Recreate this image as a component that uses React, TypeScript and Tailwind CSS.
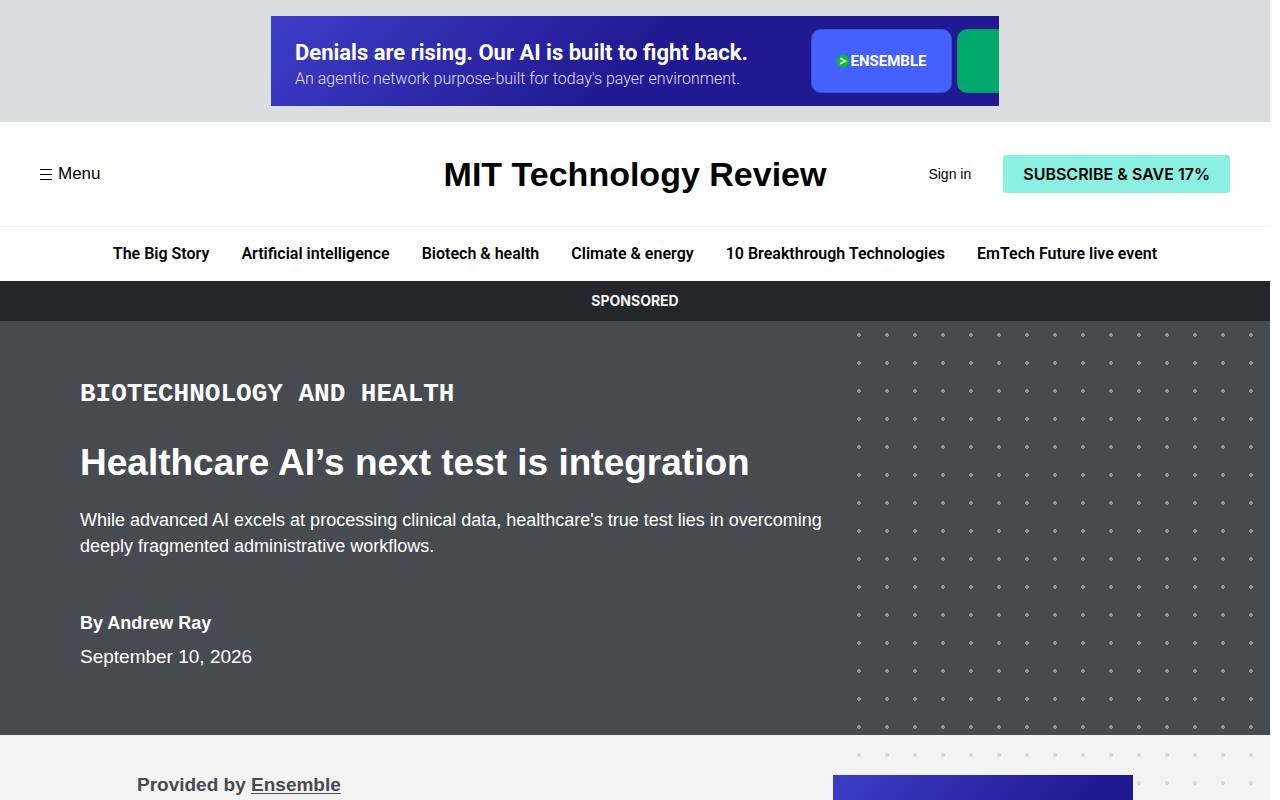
import React from "react";

const navItems = [
  "The Big Story",
  "Artificial intelligence",
  "Biotech & health",
  "Climate & energy",
  "10 Breakthrough Technologies",
  "EmTech Future live event",
];

const adGradient = "bg-[linear-gradient(135deg,#3d3dc8_0%,#211991_50%)]";

function EnsembleMark() {
  return (
    <svg viewBox="0 0 24 24" className="size-3 shrink-0" aria-hidden="true">
      <circle cx="12" cy="12" r="12" fill="#00c814" />
      <path d="M6.5 6.5 17 12 6.5 17.5" fill="none" stroke="#fff" strokeWidth="3" />
    </svg>
  );
}

function BannerAd() {
  return (
    <aside className="flex justify-center bg-[#dcdddf] py-4">
      <a
        href="#ensemble"
        className={`flex h-[90px] w-[728px] items-center overflow-hidden pl-6 font-[Roboto,sans-serif] text-white ${adGradient}`}
      >
        <div className="w-[516px] shrink-0 pt-2">
          <p className="text-[22px] leading-7 font-bold">Denials are rising. Our AI is built to fight back.</p>
          <p className="text-[16px] leading-6 font-light text-[#e0dff5]">
            An agentic network purpose-built for today's payer environment.
          </p>
        </div>
        <div className="flex h-16 w-[141px] shrink-0 items-center justify-center gap-0.5 rounded-[10px] border border-[#3a4fd8] bg-[#4460ff]">
          <EnsembleMark />
          <span className="text-[15px] leading-5 font-bold">ENSEMBLE</span>
        </div>
        <div className="ml-[5px] h-16 w-[141px] shrink-0 rounded-[10px] border border-[#0d8f6d] bg-[#00a86b]" />
      </a>
    </aside>
  );
}

function Header() {
  return (
    <header className="bg-white">
      <div className="grid h-[104px] grid-cols-[1fr_auto_1fr] items-center px-10">
        <button type="button" className="flex items-center gap-1.5 justify-self-start text-[17px] leading-6">
          <svg viewBox="0 0 12 11" className="h-[11px] w-3" fill="#000" shapeRendering="crispEdges" aria-hidden="true">
            <path d="M0 0h12v1H0zM0 5h12v1H0zM0 10h12v1H0z" />
          </svg>
          Menu
        </button>
        <a href="#home" className="text-[34px] leading-12 font-bold whitespace-nowrap">
          MIT Technology Review
        </a>
        <div className="flex items-center gap-8 justify-self-end">
          <a href="#signin" className="text-[14px] leading-5">
            Sign in
          </a>
          <a
            href="#subscribe"
            className="rounded-[3px] bg-[#8af0e1] px-5 py-2 font-[Inter,sans-serif] text-[16px] leading-[22px] font-semibold whitespace-nowrap"
          >
            SUBSCRIBE & SAVE 17%
          </a>
        </div>
      </div>
      <nav className="border-t border-[#f3f3f9]">
        <ul className="flex h-[54px] items-center justify-center gap-8 font-[Roboto,sans-serif] text-[16px] font-semibold whitespace-nowrap">
          {navItems.map((item) => (
            <li key={item}>
              <a href="#topic">{item}</a>
            </li>
          ))}
        </ul>
      </nav>
    </header>
  );
}

function DotPattern() {
  return (
    <svg className="pointer-events-none absolute inset-y-0 right-0 h-full w-[425px]" aria-hidden="true">
      <defs>
        <pattern id="dots" width="28" height="28" patternUnits="userSpaceOnUse">
          <path
            d="M13 12h2v1h1v2h-1v1h-2v-1h-1v-2h1z"
            fill="#c6c6c6"
            fillOpacity="0.6"
            shapeRendering="crispEdges"
          />
        </pattern>
      </defs>
      <rect width="100%" height="100%" fill="url(#dots)" />
    </svg>
  );
}

function Article() {
  return (
    <main className="relative bg-[#f3f3f3]">
      <section className="bg-[#484a52] px-20 pt-[60px] pb-[62px] text-white">
        <p className="font-['Liberation_Mono',monospace] text-[26px] leading-[26px] font-bold">
          BIOTECHNOLOGY AND HEALTH
        </p>
        <h1 className="mt-8 text-[37px] leading-12 font-bold">Healthcare AI’s next test is integration</h1>
        <p className="mt-5 max-w-[770px] text-[18px] leading-[26px]">
          While advanced AI excels at processing clinical data, healthcare's true test lies in overcoming deeply
          fragmented administrative workflows.
        </p>
        <p className="mt-12 text-[18px] leading-[33px] font-bold">By Andrew Ray</p>
        <p className="text-[19px] leading-[33px]">September 10, 2026</p>
      </section>
      <DotPattern />
      <section className="relative flex justify-between px-[137px] pt-10 pb-10">
        <p className="text-[19px] leading-5 font-bold text-[#484a52]">
          Provided by{" "}
          <a href="#ensemble" className="underline underline-offset-2">
            Ensemble
          </a>
        </p>
        <aside className={`h-[250px] w-[300px] ${adGradient}`} />
      </section>
    </main>
  );
}

export default function App() {
  return (
    <div className="h-screen overflow-hidden bg-white pr-2.5 font-['Liberation_Sans',Arial,sans-serif] text-black">
      <BannerAd />
      <Header />
      <div className="bg-[#25262b] text-center font-[Inter,sans-serif] text-[14px] leading-10 font-bold text-[#f3f3f3]">
        SPONSORED
      </div>
      <Article />
    </div>
  );
}
